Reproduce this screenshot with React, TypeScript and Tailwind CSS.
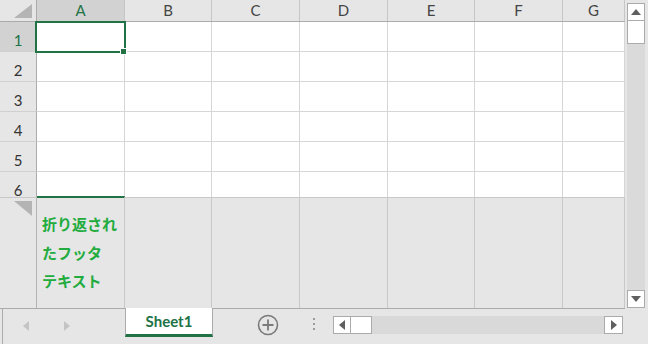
import React from 'react';

const cols = [
  { name: 'A', w: 'w-[88px]' },
  { name: 'B', w: 'w-[87px]' },
  { name: 'C', w: 'w-[88px]' },
  { name: 'D', w: 'w-[88px]' },
  { name: 'E', w: 'w-[87px]' },
  { name: 'F', w: 'w-[88px]' },
  { name: 'G', w: 'w-[62px]' },
];

const rows = [1, 2, 3, 4, 5, 6];

const font = { fontFamily: 'Lato, "Open Sans", "Liberation Sans", sans-serif' };

const CornerTriangle = ({ down }: { down?: boolean }) => (
  <svg width="18" height="15" viewBox="0 0 18 15">
    {down ? <polygon points="0,0 18,0 18,15" fill="#b4b4b4" /> : <polygon points="18,0 18,14 0,14" fill="#b4b4b4" />}
  </svg>
);

const Arrow = ({ dir, color = '#5f5f5f' }: { dir: 'l' | 'r' | 'u' | 'd'; color?: string }) => {
  const pts = {
    l: '7,0 7,10 1,5',
    r: '1,0 1,10 7,5',
    u: '0,7 10,7 5,1',
    d: '0,1 10,1 5,7',
  }[dir];
  const horiz = dir === 'l' || dir === 'r';
  return (
    <svg width={horiz ? 8 : 10} height={horiz ? 10 : 8} viewBox={horiz ? '0 0 8 10' : '0 0 10 8'}>
      <polygon points={pts} fill={color} />
    </svg>
  );
};

const App = () => {
  return (
    <div className="w-[648px] h-[344px] bg-[#e6e6e6] flex flex-col overflow-hidden select-none" style={font}>
      <div className="flex h-[308px]">
        {/* Sheet */}
        <div className="relative w-[625px] flex flex-col">
          {/* Column headers */}
          <div className="flex h-[22px] border-b border-[#ababab]">
            <div className="w-[37px] flex items-start justify-end pt-[4px] pr-[4px] border-r border-[#ababab]">
              <CornerTriangle />
            </div>
            {cols.map((c) => (
              <div
                key={c.name}
                className={`${c.w} flex items-center justify-center border-r border-[#c6c6c6] text-[15px] ${
                  c.name === 'A' ? 'bg-[#d2d2d2] text-[#217346]' : 'text-[#444444]'
                }`}
              >
                {c.name}
              </div>
            ))}
          </div>

          {/* Rows */}
          <div className="h-[175px] overflow-hidden">
            {rows.map((r) => (
              <div key={r} className="flex h-[30px]">
                <div
                  className={`w-[37px] flex items-center justify-center pt-[7px] border-r border-b border-r-[#ababab] border-b-[#d0d0d0] text-[15px] ${
                    r === 1 ? 'bg-[#d2d2d2] text-[#217346]' : 'text-[#333333]'
                  }`}
                >
                  {r}
                </div>
                {cols.map((c) => (
                  <div key={c.name} className={`${c.w} bg-white border-r border-b border-[#d6d6d6]`} />
                ))}
              </div>
            ))}
          </div>

          {/* Footer */}
          <div className="flex flex-1 border-t border-[#c8c8c8]">
            <div className="w-[37px] flex items-start justify-end pt-[3px] pr-[4px] border-r border-[#b4b4b4]">
              <CornerTriangle down />
            </div>
            {cols.map((c) => (
              <div
                key={c.name}
                className={`${c.w} border-r border-[#c8c8c8] ${c.name === 'A' ? 'border-t-2 border-t-[#217346] -mt-[2px]' : ''}`}
              >
                {c.name === 'A' && (
                  <div
                    className="pl-[5px] pt-[12px] text-[15px] leading-[28.5px] font-bold text-[#22ac3e]"
                    style={{ fontFamily: '"Noto Sans CJK JP", sans-serif' }}
                  >
                    <div>折り返され</div>
                    <div>たフッタ</div>
                    <div>テキスト</div>
                  </div>
                )}
              </div>
            ))}
          </div>

          {/* Selected cell A1 */}
          <div className="absolute left-[35px] top-[21px] w-[91px] h-[32px] border-2 border-[#217346]" />
          <div className="absolute left-[120px] top-[48px] w-[7px] h-[7px] bg-[#217346] border border-white" />
        </div>

        {/* Vertical scrollbar */}
        <div className="w-[23px] pl-[2px] pr-[3px] pt-[3px]">
          <div className="h-full bg-[#dadada] flex flex-col">
            <div className="h-[18px] bg-white border border-[#ababab] flex items-center justify-center">
              <Arrow dir="u" />
            </div>
            <div className="h-[23px] bg-white border border-t-0 border-[#ababab]" />
            <div className="flex-1" />
            <div className="h-[18px] bg-white border border-[#ababab] flex items-center justify-center">
              <Arrow dir="d" />
            </div>
          </div>
        </div>
      </div>

      {/* Sheet tab bar */}
      <div className="flex h-[36px]">
        <div className="w-[625px] border-t border-[#ababab] flex items-start">
          <div className="ml-[2px] h-full border-l border-[#ababab]" />
          <div className="ml-[19px] mt-[12px]">
            <Arrow dir="l" color="#c4c4c4" />
          </div>
          <div className="ml-[33px] mt-[12px]">
            <Arrow dir="r" color="#c4c4c4" />
          </div>
          <div className="ml-[54px] -mt-px h-[29px] w-[88px] bg-white border-x border-[#ababab] border-b-[3px] border-b-[#217346] flex items-center justify-center text-[15px] font-bold text-[#217346]">
            Sheet1
          </div>
          <div className="ml-[44px] mt-[5px]">
            <svg width="22" height="22" viewBox="0 0 22 22">
              <circle cx="11" cy="11" r="9.5" fill="none" stroke="#7a7a7a" strokeWidth="1.6" />
              <path d="M11 5.5v11M5.5 11h11" stroke="#7a7a7a" strokeWidth="1.8" />
            </svg>
          </div>
          <div className="ml-[34px] mt-[9px] flex flex-col gap-[3px]">
            <div className="w-[2px] h-[2px] bg-[#9a9a9a]" />
            <div className="w-[2px] h-[2px] bg-[#9a9a9a]" />
            <div className="w-[2px] h-[2px] bg-[#9a9a9a]" />
          </div>
          <div className="ml-[18px] mt-[7px] w-[290px] h-[18px] flex bg-[#d9d9d9]">
            <div className="w-[18px] h-full bg-white border border-[#ababab] flex items-center justify-center">
              <Arrow dir="l" />
            </div>
            <div className="w-[21px] h-full bg-white border border-l-0 border-[#ababab]" />
            <div className="flex-1" />
            <div className="w-[19px] h-full bg-white border border-[#ababab] flex items-center justify-center">
              <Arrow dir="r" />
            </div>
          </div>
        </div>
      </div>
    </div>
  );
};

export default App;
